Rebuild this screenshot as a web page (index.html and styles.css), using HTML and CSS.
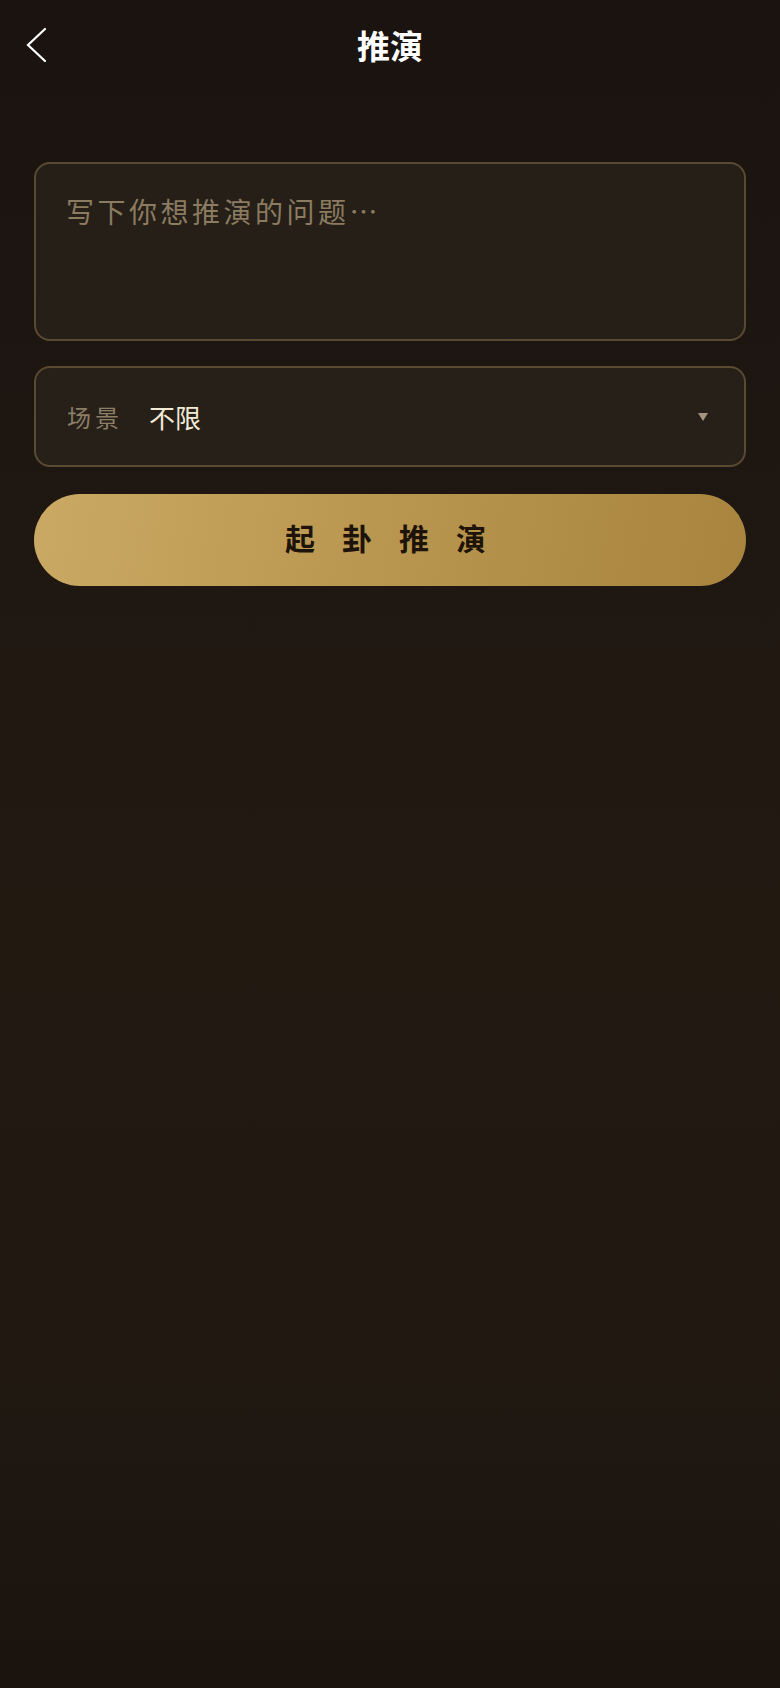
FILE: index.html
```html
<!DOCTYPE html>
<html lang="zh-CN">
<head>
<meta charset="utf-8">
<meta name="viewport" content="width=device-width, initial-scale=1">
<title>推演</title>
<link rel="stylesheet" href="styles.css">
</head>
<body>
<div class="page">
  <header class="topbar">
    <button class="back" aria-label="返回">
      <svg class="back-icon" viewBox="0 0 24 36" width="24" height="36"><polyline points="21,2 4,18 21,34" fill="none" stroke="#ffffff" stroke-width="2.2" stroke-linecap="round" stroke-linejoin="miter"/></svg>
    </button>
    <h1 class="title">推演</h1>
    <span class="spacer"></span>
  </header>
  <main class="content">
    <textarea class="question" placeholder="写下你想推演的问题…"></textarea>
    <div class="select">
      <span class="select-label">场景</span>
      <span class="select-value">不限</span>
      <svg class="caret" viewBox="0 0 10 8" width="10" height="8"><polygon points="0,0 10,0 5,8" fill="#a39680"/></svg>
    </div>
    <button class="submit">起卦推演</button>
  </main>
</div>
</body>
</html>
```
FILE: styles.css
```css
html, body {
  margin: 0;
  padding: 0;
}
body {
  background: linear-gradient(180deg, #1a130f 0%, #1e1611 25%, #221911 55%, #201811 80%, #1b140e 100%);
  min-height: 1688px;
  font-family: "Noto Sans CJK SC", "Noto Sans", sans-serif;
  color: #f0e6d0;
}
.page {
  min-height: 1688px;
}
.topbar {
  height: 90px;
  display: grid;
  grid-template-columns: 80px 1fr 80px;
  align-items: center;
}
.back {
  background: none;
  border: none;
  padding: 0 0 0 24px;
  margin: 0;
  height: 90px;
  display: flex;
  align-items: center;
  cursor: pointer;
}
.back-icon {
  display: block;
}
.title {
  margin: 0;
  text-align: center;
  font-size: 33px;
  font-weight: 700;
  color: #ffffff;
  line-height: 1;
}
.content {
  padding: 72px 34px 0;
  display: flex;
  flex-direction: column;
  gap: 25px;
}
.question {
  display: block;
  width: 100%;
  height: 179px;
  box-sizing: border-box;
  border: 2px solid #5a4a32;
  border-radius: 16px;
  background: #261f17;
  padding: 28px 30px 20px;
  resize: none;
  outline: none;
  font-family: "Noto Sans CJK SC", "Noto Sans", sans-serif;
  font-size: 28px;
  line-height: 1.4;
  letter-spacing: 3.5px;
  color: #e8dcc4;
}
.question::placeholder {
  color: #8a7b61;
}
.select {
  height: 101px;
  box-sizing: border-box;
  border: 2px solid #5a4a32;
  border-radius: 16px;
  background: #272019;
  display: flex;
  align-items: center;
  padding: 0 36px 0 31px;
}
.select-label {
  font-size: 24px;
  letter-spacing: 4px;
  color: #8c7e66;
  margin-right: 26px;
}
.select-value {
  font-size: 26px;
  color: #f3ead6;
}
.caret {
  margin-left: auto;
  display: block;
}
.submit {
  margin-top: 2px;
  height: 92px;
  border: none;
  border-radius: 46px;
  background: linear-gradient(100deg, #caa964 0%, #b8964f 50%, #a8843e 100%);
  font-family: "Noto Sans CJK SC", "Noto Sans", sans-serif;
  font-size: 30px;
  font-weight: 700;
  letter-spacing: 27px;
  padding: 0 0 6px 18px;
  color: #1e1309;
  cursor: pointer;
}
```
